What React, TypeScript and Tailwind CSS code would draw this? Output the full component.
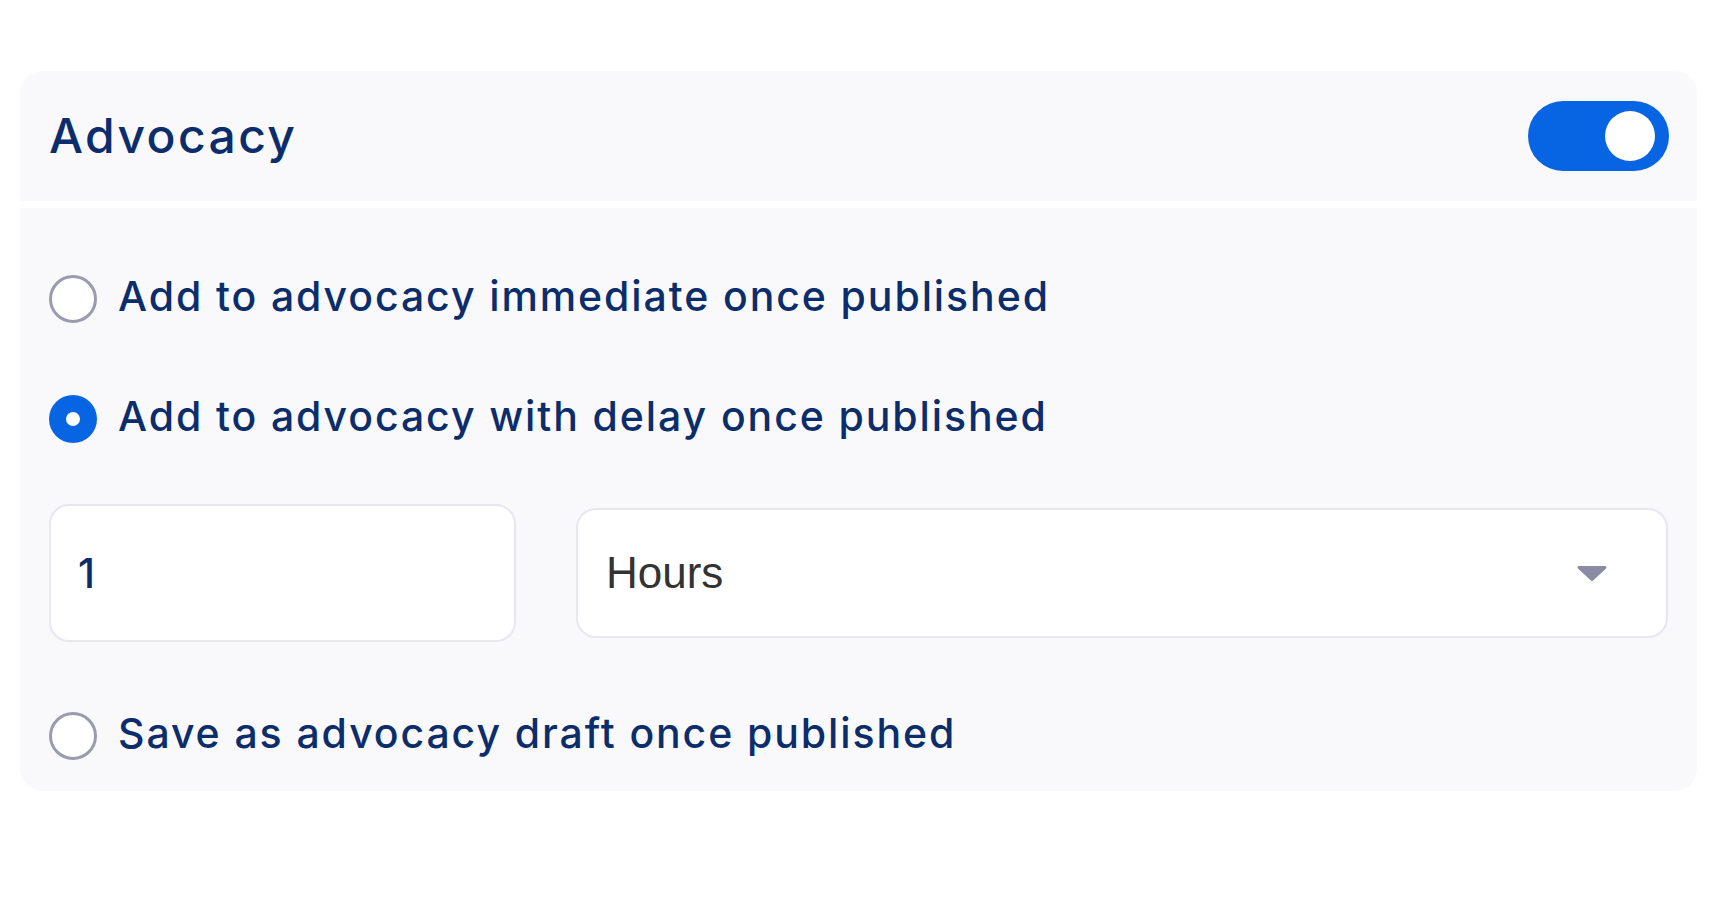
import { useState } from 'react'

const navy = 'text-[#0c2d6b]'
const panel = 'bg-[#f9f9fb]'

function Radio({ checked }: { checked: boolean }) {
  return checked ? (
    <span className="flex h-[48px] w-[48px] shrink-0 items-center justify-center rounded-full bg-[#0764e3]">
      <span className="h-[14px] w-[14px] rounded-full bg-white" />
    </span>
  ) : (
    <span className="h-[48px] w-[48px] shrink-0 rounded-full border-[3px] border-[#9b9bb0] bg-white" />
  )
}

function Option({
  label,
  checked,
  onSelect,
  className = '',
}: {
  label: string
  checked: boolean
  onSelect: () => void
  className?: string
}) {
  return (
    <button
      type="button"
      onClick={onSelect}
      className={`flex h-[48px] items-center gap-[21px] text-left ${className}`}
    >
      <Radio checked={checked} />
      <span className={`mb-[6px] text-[41px] font-medium leading-none tracking-[1.9px] ${navy}`}>
        {label}
      </span>
    </button>
  )
}

export default function App() {
  const [enabled, setEnabled] = useState(true)
  const [mode, setMode] = useState<'now' | 'delay' | 'draft'>('delay')

  return (
    <div
      className="min-h-screen bg-white pt-[71px] pl-[20px] pr-[13px]"
      style={{ fontFamily: 'Inter, "Noto Sans", sans-serif' }}
    >
      <div className="flex flex-col gap-[7px]">
        <div
          className={`flex h-[130px] items-center justify-between rounded-t-[22px] pl-[29px] pr-[28px] ${panel}`}
        >
          <h2 className={`text-[48px] font-medium leading-none tracking-[2.4px] ${navy}`}>
            Advocacy
          </h2>
          <button
            type="button"
            onClick={() => setEnabled(!enabled)}
            className={`flex h-[70px] w-[141px] items-center rounded-full px-[14px] ${
              enabled ? 'justify-end bg-[#0764e3]' : 'justify-start bg-[#c9c9d6]'
            }`}
          >
            <span className="h-[50px] w-[50px] rounded-full bg-white" />
          </button>
        </div>

        <div className={`flex flex-col rounded-b-[22px] px-[29px] pt-[67px] pb-[31px] ${panel}`}>
          <Option
            label="Add to advocacy immediate once published"
            checked={mode === 'now'}
            onSelect={() => setMode('now')}
          />
          <Option
            label="Add to advocacy with delay once published"
            checked={mode === 'delay'}
            onSelect={() => setMode('delay')}
            className="mt-[72px]"
          />

          <div className="mt-[61px] flex items-center gap-[60px]">
            <div className="flex h-[138px] w-[467px] items-center rounded-[20px] border-2 border-[#e7e7ef] bg-white pl-[27px]">
              <span className={`text-[41px] font-medium leading-none ${navy}`}>1</span>
            </div>
            <div className="flex h-[130px] flex-1 items-center justify-between rounded-[20px] border-2 border-[#e7e7ef] bg-white pl-[28px] pr-[59px]">
              <span
                className="text-[44px] leading-none text-[#333333]"
                style={{ fontFamily: '"Liberation Sans", Arial, sans-serif' }}
              >
                Hours
              </span>
              <svg width="30" height="17" viewBox="0 0 30 17" className="mt-[1px]">
                <path d="M2 1h26a1.5 1.5 0 0 1 1.1 2.5L16.1 15.6a1.5 1.5 0 0 1-2.2 0L0.9 3.5A1.5 1.5 0 0 1 2 1z" fill="#8b8ca3" />
              </svg>
            </div>
          </div>

          <Option
            label="Save as advocacy draft once published"
            checked={mode === 'draft'}
            onSelect={() => setMode('draft')}
            className="mt-[70px]"
          />
        </div>
      </div>
    </div>
  )
}
